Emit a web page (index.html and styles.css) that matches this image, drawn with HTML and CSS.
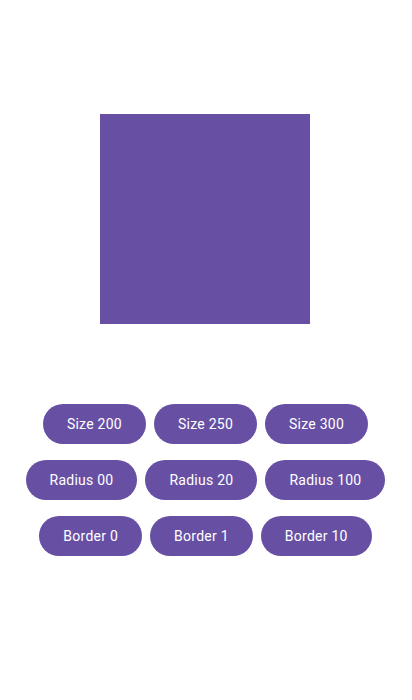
FILE: index.html
```html
<!DOCTYPE html>
<html>
<head>
<meta charset="utf-8">
<link rel="stylesheet" href="styles.css">
</head>
<body>
<div class="page">
  <div class="square"></div>
  <div class="rows">
    <div class="row">
      <button class="btn">Size 200</button>
      <button class="btn">Size 250</button>
      <button class="btn">Size 300</button>
    </div>
    <div class="row">
      <button class="btn">Radius 00</button>
      <button class="btn">Radius 20</button>
      <button class="btn">Radius 100</button>
    </div>
    <div class="row">
      <button class="btn">Border 0</button>
      <button class="btn">Border 1</button>
      <button class="btn">Border 10</button>
    </div>
  </div>
</div>
</body>
</html>
```
FILE: styles.css
```css
html, body {
  margin: 0;
  padding: 0;
  background: #ffffff;
}
.page {
  width: 411px;
  height: 700px;
  display: flex;
  flex-direction: column;
  align-items: center;
  padding-top: 114px;
  box-sizing: border-box;
}
.square {
  width: 210px;
  height: 210px;
  margin-right: 1px;
  background: #6750a4;
}
.rows {
  margin-top: 80px;
  display: flex;
  flex-direction: column;
  gap: 16px;
  align-items: center;
}
.row {
  display: flex;
  gap: 8px;
}
.btn {
  height: 40px;
  padding: 0 24px;
  border: none;
  border-radius: 20px;
  background: #6750a4;
  color: #ffffff;
  font-family: Roboto, "Noto Sans", sans-serif;
  font-size: 14px;
  font-weight: 400;
  letter-spacing: 0.25px;
  line-height: 20px;
  cursor: pointer;
}
```
